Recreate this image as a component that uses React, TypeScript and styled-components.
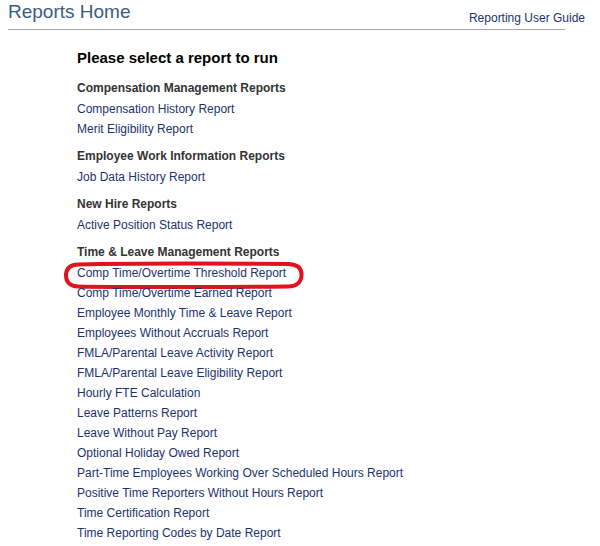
import React from "react";
import styled, { createGlobalStyle } from "styled-components";

const Global = createGlobalStyle`
  html, body { margin: 0; padding: 0; background: #fff; }
  body { font-family: "Liberation Sans", Arial, sans-serif; }
`;

const Page = styled.div`
  width: 600px;
  min-height: 546px;
  background: #fff;
`;

const TopBar = styled.header`
  display: flex;
  justify-content: space-between;
  align-items: flex-end;
  padding: 2px 15px 0 8px;
  height: 26px;
`;

const Title = styled.h1`
  margin: 0 0 5px;
  font-size: 19px;
  font-weight: normal;
  line-height: 22px;
  color: #3c5a85;
`;

const GuideLink = styled.a`
  font-size: 12px;
  line-height: 16px;
  color: #1c3370;
  text-decoration: none;
  margin-bottom: 2px;
`;

const Divider = styled.hr`
  margin: 1px 35px 0 8px;
  border: 0;
  height: 1px;
  background: #a8a8a8;
`;

const Content = styled.main`
  padding: 18px 0 0 77px;
  display: flex;
  flex-direction: column;
  gap: 8px;
`;

const Lead = styled.h2`
  margin: 0 0 2px;
  font-size: 15px;
  line-height: 20px;
  font-weight: bold;
  color: #000;
`;

const Section = styled.section`
  display: flex;
  flex-direction: column;
`;

const SectionTitle = styled.h3`
  margin: 0;
  font-size: 12px;
  line-height: 20px;
  font-weight: bold;
  color: #333;
`;

const Item = styled.div`
  position: relative;
  height: 20px;
  padding-top: 2px;
  box-sizing: border-box;
  display: flex;
  align-items: center;
`;

const ReportLink = styled.a`
  font-size: 12px;
  line-height: 18px;
  color: #1c3370;
  text-decoration: none;
  position: relative;
`;

const Mark = styled.svg`
  position: absolute;
  left: -13px;
  top: 0px;
  width: 240px;
  height: 28px;
  overflow: visible;
  pointer-events: none;
`;

type Sec = { title: string; links: string[] };

const sections: Sec[] = [
  {
    title: "Compensation Management Reports",
    links: ["Compensation History Report", "Merit Eligibility Report"],
  },
  { title: "Employee Work Information Reports", links: ["Job Data History Report"] },
  { title: "New Hire Reports", links: ["Active Position Status Report"] },
  {
    title: "Time & Leave Management Reports",
    links: [
      "Comp Time/Overtime Threshold Report",
      "Comp Time/Overtime Earned Report",
      "Employee Monthly Time & Leave Report",
      "Employees Without Accruals Report",
      "FMLA/Parental Leave Activity Report",
      "FMLA/Parental Leave Eligibility Report",
      "Hourly FTE Calculation",
      "Leave Patterns Report",
      "Leave Without Pay Report",
      "Optional Holiday Owed Report",
      "Part-Time Employees Working Over Scheduled Hours Report",
      "Positive Time Reporters Without Hours Report",
      "Time Certification Report",
      "Time Reporting Codes by Date Report",
    ],
  },
];

const MARKED = "Comp Time/Overtime Threshold Report";

export default function App() {
  return (
    <Page>
      <Global />
      <TopBar>
        <Title>Reports Home</Title>
        <GuideLink href="#">Reporting User Guide</GuideLink>
      </TopBar>
      <Divider />
      <Content>
        <Lead>Please select a report to run</Lead>
        {sections.map((s) => (
          <Section key={s.title}>
            <SectionTitle>{s.title}</SectionTitle>
            {s.links.map((l) => (
              <Item key={l}>
                <ReportLink href="#">{l}</ReportLink>
                {l === MARKED && (
                  <Mark viewBox="0 0 240 28">
                    <path
                      d="M14 2.5 C60 1.5 160 1.5 224 2 C233 2.2 237.5 6 237.5 12.5 C237.5 20 233 24.5 224 24.5 C160 25 60 25.5 14 24.5 C6 24.3 2 20 2 13.5 C2 6.5 6 2.7 14 2.5 Z"
                      fill="none"
                      stroke="#e0141e"
                      strokeWidth="4"
                    />
                  </Mark>
                )}
              </Item>
            ))}
          </Section>
        ))}
      </Content>
    </Page>
  );
}
